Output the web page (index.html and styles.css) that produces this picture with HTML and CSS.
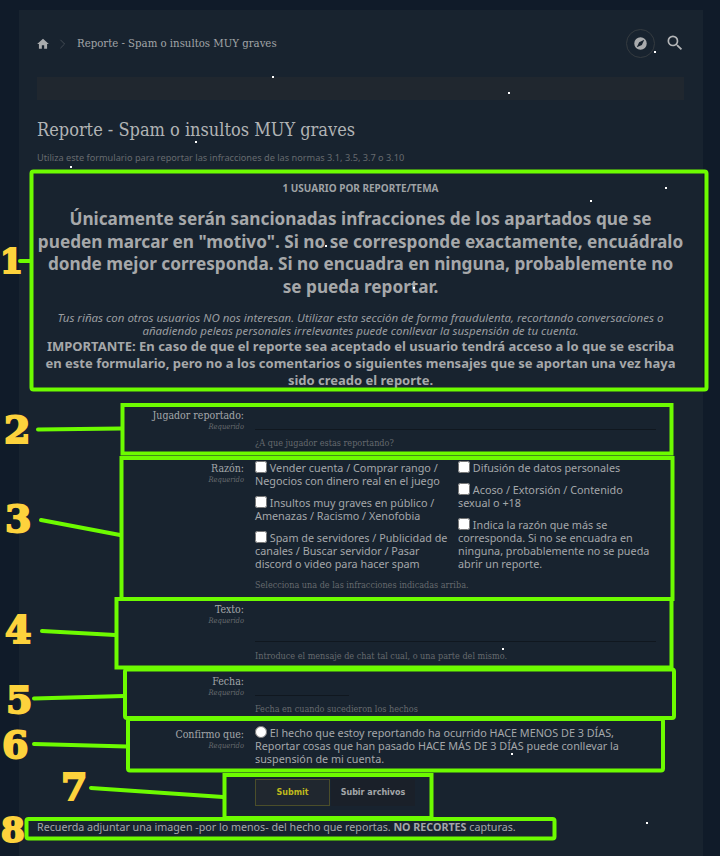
FILE: index.html
```html
<!DOCTYPE html>
<html lang="es">
<head>
    <meta charset="UTF-8">
    <title>Reporte - Spam o insultos MUY graves</title>
    <link rel="stylesheet" href="styles.css">
</head>
<body>
    <div class="panel">
        <div class="topbar">
            <nav class="crumbs">
                <svg class="home-icon" viewBox="0 0 24 24"><path d="M10 20v-6h4v6h5v-8h3L12 3 2 12h3v8z"/></svg>
                <svg class="crumb-sep" viewBox="0 0 10 14"><path d="M2 1l6 6-6 6"/></svg>
                <span>Reporte - Spam o insultos MUY graves</span>
            </nav>
            <div class="top-actions">
                <span class="round-btn">
                    <svg viewBox="0 0 24 24"><path d="M12 2a10 10 0 1 0 0 20 10 10 0 0 0 0-20zm2.2 12.2L6 18l3.8-8.2L18 6z"/></svg>
                </span>
                <svg class="search-icon" viewBox="0 0 24 24"><path d="M15.5 14h-.79l-.28-.27A6.47 6.47 0 0 0 16 9.5 6.5 6.5 0 1 0 9.5 16c1.61 0 3.09-.59 4.23-1.57l.27.28v.79l5 4.99L20.49 19l-4.99-5zm-6 0C7.01 14 5 11.99 5 9.5S7.01 5 9.5 5 14 7.01 14 9.5 11.99 14 9.5 14z"/></svg>
            </div>
        </div>

        <div class="strip"></div>

        <h1>Reporte - Spam o insultos MUY graves</h1>
        <p class="intro">Utiliza este formulario para reportar las infracciones de las normas 3.1, 3.5, 3.7 o 3.10</p>

        <div class="notice">
            <div class="notice-title">1 USUARIO POR REPORTE/TEMA</div>
            <div class="notice-big">Únicamente serán sancionadas infracciones de los apartados que se<br>pueden marcar en "motivo". Si no se corresponde exactamente, encuádralo<br>donde mejor corresponda. Si no encuadra en ninguna, probablemente no<br>se pueda reportar.</div>
            <div class="notice-small">Tus riñas con otros usuarios NO nos interesan. Utilizar esta sección de forma fraudulenta, recortando conversaciones o<br>añadiendo peleas personales irrelevantes puede conllevar la suspensión de tu cuenta.</div>
            <div class="notice-strong">IMPORTANTE: En caso de que el reporte sea aceptado el usuario tendrá acceso a lo que se escriba<br>en este formulario, pero no a los comentarios o siguientes mensajes que se aportan una vez haya<br>sido creado el reporte.</div>
        </div>

        <form class="report-form">
            <div class="row row-player">
                <div class="row-label"><label>Jugador reportado:</label><small>Requerido</small></div>
                <div class="row-field">
                    <input type="text" class="line-input">
                    <div class="hint">¿A que jugador estas reportando?</div>
                </div>
            </div>

            <div class="row row-reason">
                <div class="row-label"><label>Razón:</label><small>Requerido</small></div>
                <div class="row-field">
                    <div class="choices">
                        <div class="choice-col">
                            <label class="choice"><input type="checkbox"> Vender cuenta / Comprar rango / Negocios con dinero real en el juego</label>
                            <label class="choice"><input type="checkbox"> Insultos muy graves en público / Amenazas / Racismo / Xenofobia</label>
                            <label class="choice"><input type="checkbox"> Spam de servidores / Publicidad de canales / Buscar servidor / Pasar discord o video para hacer spam</label>
                        </div>
                        <div class="choice-col">
                            <label class="choice"><input type="checkbox"> Difusión de datos personales</label>
                            <label class="choice"><input type="checkbox"> Acoso / Extorsión / Contenido sexual o +18</label>
                            <label class="choice"><input type="checkbox"> Indica la razón que más se corresponda. Si no se encuadra en ninguna, probablemente no se pueda abrir un reporte.</label>
                        </div>
                    </div>
                    <div class="hint">Selecciona una de las infracciones indicadas arriba.</div>
                </div>
            </div>

            <div class="row row-text">
                <div class="row-label"><label>Texto:</label><small>Requerido</small></div>
                <div class="row-field">
                    <textarea class="line-input line-area"></textarea>
                    <div class="hint">Introduce el mensaje de chat tal cual, o una parte del mismo.</div>
                </div>
            </div>

            <div class="row row-date">
                <div class="row-label"><label>Fecha:</label><small>Requerido</small></div>
                <div class="row-field">
                    <input type="text" class="line-input line-short">
                    <div class="hint">Fecha en cuando sucedieron los hechos</div>
                </div>
            </div>

            <div class="row row-confirm">
                <div class="row-label"><label>Confirmo que:</label><small>Requerido</small></div>
                <div class="row-field">
                    <label class="choice"><input type="radio"> El hecho que estoy reportando ha ocurrido HACE MENOS DE 3 DÍAS, Reportar cosas que han pasado HACE MÁS DE 3 DÍAS puede conllevar la suspensión de mi cuenta.</label>
                </div>
            </div>

            <div class="row row-buttons">
                <div></div>
                <div class="buttons">
                    <button type="button" class="btn btn-submit">Submit</button>
                    <button type="button" class="btn btn-files">Subir archivos</button>
                </div>
            </div>
        </form>

        <p class="reminder">Recuerda adjuntar una imagen -por lo menos- del hecho que reportas. <b>NO RECORTES</b> capturas.</p>
    </div>

    <!-- annotations drawn on top of the screenshot -->
    <svg class="marks" viewBox="0 0 720 856">
        <rect x="31.5" y="171.5" width="675" height="218" rx="2"/>
        <rect x="122.5" y="405" width="549" height="48.5"/>
        <rect x="121.5" y="458" width="551" height="141"/>
        <rect x="116.5" y="599" width="555" height="68.5"/>
        <rect x="125" y="669.5" width="549" height="48.5" rx="2"/>
        <rect x="128" y="719" width="535" height="51.5" rx="2"/>
        <rect x="224.5" y="775" width="207" height="43"/>
        <rect x="26.5" y="819" width="528" height="19.5" rx="2"/>
        <path d="M20 261H30M38 429.5L121 428.5M41 520L120 535M42 631L115 635M34 698.5L124 696M34 744L127 746.5M91 788L223 797"/>
    </svg>
    <span class="mark-num num-1">1</span>
    <span class="mark-num num-2">2</span>
    <span class="mark-num num-3">3</span>
    <span class="mark-num num-4">4</span>
    <span class="mark-num num-5">5</span>
    <span class="mark-num num-6">6</span>
    <span class="mark-num num-7">7</span>
    <span class="mark-num num-8">8</span>

    <i class="speck s1"></i><i class="speck s2"></i><i class="speck s3"></i><i class="speck s4"></i>
    <i class="speck s5"></i><i class="speck s6"></i><i class="speck s7"></i><i class="speck s8"></i>
    <i class="speck s9"></i><i class="speck s10"></i><i class="speck s11"></i><i class="speck s12"></i>
</body>
</html>
```

FILE: styles.css
```css
* {
    margin: 0;
    padding: 0;
    box-sizing: border-box;
}

html, body {
    height: 856px;
    overflow: hidden;
}

body {
    position: relative;
    background: #101b29;
    color: #b4b6b8;
    font-family: 'Noto Sans', sans-serif;
    padding: 10px 17px 0 19px;
}

.panel {
    height: 846px;
    background: #18232f;
    padding: 0 19px 0 18px;
}

/* top bar */
.topbar {
    height: 67px;
    display: flex;
    align-items: center;
    justify-content: space-between;
}

.crumbs {
    display: flex;
    align-items: center;
    font-family: 'DejaVu Serif Condensed', 'DejaVu Serif', serif;
    font-size: 11.3px;
    color: #a2a5a8;
}

.home-icon {
    width: 14px;
    height: 14px;
    fill: #a9abad;
    margin-left: -1px;
}

.crumb-sep {
    width: 7px;
    height: 10px;
    margin: 0 11px 0 9px;
    fill: none;
    stroke: #4a525a;
    stroke-width: 1.2;
}

.top-actions {
    display: flex;
    align-items: center;
    gap: 10px;
    margin-right: -1px;
    margin-top: -1px;
}

.round-btn {
    width: 29px;
    height: 29px;
    border: 1px solid #353b40;
    border-radius: 50%;
    display: flex;
    align-items: center;
    justify-content: center;
}

.round-btn svg {
    width: 15px;
    height: 15px;
    fill: #a9abad;
}

.search-icon {
    width: 20px;
    height: 20px;
    fill: #b4b6b8;
}

.strip {
    height: 23px;
    background: #20272f;
}

h1 {
    font-family: 'DejaVu Serif Condensed', 'DejaVu Serif', serif;
    font-weight: 400;
    font-size: 18px;
    line-height: 22px;
    margin-top: 19px;
    color: #b1b3b5;
}

.intro {
    font-size: 9.2px;
    line-height: 12px;
    margin-top: 11px;
    color: #666a6e;
}

/* notice block */
.notice {
    margin-top: 6px;
    height: 224px;
    text-align: center;
    padding: 11px 0 0;
    white-space: nowrap;
}

.notice-title {
    font-size: 10px;
    font-weight: 700;
    line-height: 14px;
    color: #9fa2a5;
}

.notice-big {
    font-size: 17.2px;
    font-weight: 700;
    line-height: 22.7px;
    margin-top: 13px;
    color: #a6a8aa;
}

.notice-small {
    font-style: italic;
    font-size: 11.5px;
    line-height: 13.5px;
    margin-top: 12px;
    color: #9a9da0;
}

.notice-strong {
    font-size: 13px;
    font-weight: 700;
    line-height: 17.3px;
    margin-top: 0;
    color: #a6a8aa;
}

/* form rows */
.report-form {
    margin-top: 10px;
}

.row {
    display: grid;
    grid-template-columns: 207px 1fr;
    column-gap: 11px;
}

.row-label {
    text-align: right;
    font-family: 'DejaVu Serif Condensed', 'DejaVu Serif', serif;
}

.row-label label {
    display: block;
    font-size: 10.5px;
    line-height: 14px;
    color: #a4a7aa;
}

.row-label small {
    display: block;
    font-style: italic;
    font-size: 7.5px;
    line-height: 9px;
    color: #666a6e;
}

.row-field {
    min-width: 0;
}

.hint {
    font-family: 'DejaVu Serif Condensed', 'DejaVu Serif', serif;
    font-size: 9px;
    line-height: 12px;
    color: #666a6e;
}

.line-input {
    display: block;
    width: 401px;
    height: 22px;
    background: transparent;
    border: none;
    border-bottom: 1px solid #10171f;
    outline: none;
    resize: none;
}

.line-short {
    width: 94px;
}

.row-player {
    height: 50px;
    padding-top: 4px;
}

.row-player .hint {
    margin-top: 7px;
}

.row-reason {
    height: 140px;
    padding-top: 5px;
}

.row-reason .row-label {
    padding-top: 2px;
}

.row-reason .row-field {
    padding-top: 2px;
}

.choices {
    display: flex;
    gap: 10px;
}

.choice-col {
    width: 193px;
}

.choice {
    display: block;
    font-size: 10.8px;
    line-height: 13.2px;
    margin-bottom: 8.5px;
    color: #a4a7aa;
}

.choice:last-child {
    margin-bottom: 0;
}

.choice input {
    width: 12px;
    height: 12px;
    margin: 0;
    vertical-align: -1px;
}

.row-reason .hint {
    margin-top: 8.5px;
}

.row-text {
    height: 73px;
    padding-top: 8px;
}

.line-area {
    height: 40px;
}

.row-text .hint {
    margin-top: 8px;
}

.row-date {
    height: 51px;
    padding-top: 7px;
}

.row-date .hint {
    margin-top: 7px;
}

.row-confirm {
    height: 54px;
    padding-top: 9px;
}

.row-confirm .row-field {
    margin-top: -1px;
}

.row-confirm .choice {
    width: 372px;
}

.row-buttons {
    padding-top: 7px;
}

.buttons {
    display: flex;
}

.btn {
    height: 27px;
    font-family: 'DejaVu Sans', sans-serif;
    font-size: 8px;
    font-weight: 700;
    border: 1px solid transparent;
}

.btn-submit {
    width: 75px;
    background: #20272f;
    color: #bfb81c;
    border-color: #4b4e2a;
}

.btn-files {
    width: 84px;
    margin-left: 1px;
    background: #1a2029;
    color: #a4a7aa;
}

.reminder {
    margin-top: 14px;
    font-size: 10.7px;
    line-height: 14px;
    color: #a4a7aa;
}

/* annotations */
.marks {
    position: absolute;
    left: 0;
    top: 0;
    width: 720px;
    height: 856px;
    fill: none;
    stroke: #6dfb00;
    stroke-width: 4;
    stroke-linecap: round;
}

.mark-num {
    position: absolute;
    font-family: 'DejaVu Serif', serif;
    font-weight: 700;
    font-size: 38px;
    line-height: 40px;
    color: #fdd23c;
    -webkit-text-stroke: 2px #fdd23c;
}

.num-1 { left: 0; top: 242px; font-size: 33px; }
.num-2 { left: 4px; top: 410px; }
.num-3 { left: 5px; top: 499px; }
.num-4 { left: 5px; top: 610px; }
.num-5 { left: 6px; top: 680px; }
.num-6 { left: 2px; top: 725px; }
.num-7 { left: 61px; top: 767px; }
.num-8 { left: 1px; top: 810px; font-size: 34px; }

.speck {
    position: absolute;
    width: 2px;
    height: 2px;
    background: #fff;
}

.s1 { left: 272px; top: 76px; }
.s2 { left: 508px; top: 92px; }
.s3 { left: 195px; top: 141px; }
.s4 { left: 70px; top: 166px; }
.s5 { left: 654px; top: 51px; }
.s6 { left: 590px; top: 200px; }
.s7 { left: 665px; top: 187px; }
.s8 { left: 511px; top: 753px; }
.s9 { left: 646px; top: 822px; }
.s10 { left: 502px; top: 648px; }
.s11 { left: 413px; top: 287px; }
.s12 { left: 325px; top: 245px; }
```
